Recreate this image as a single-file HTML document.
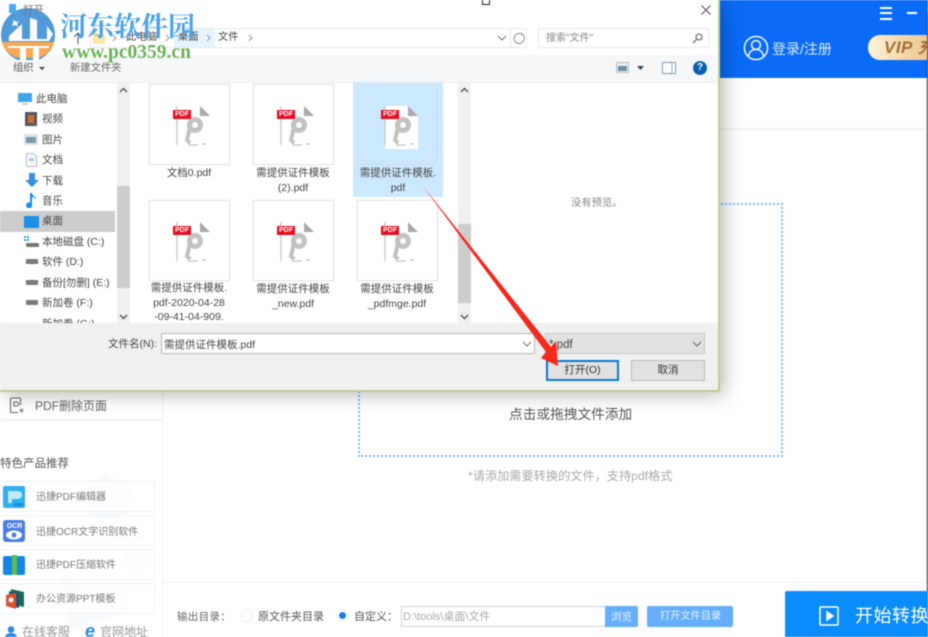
<!DOCTYPE html>
<html lang="zh"><head><meta charset="utf-8"><title>打开</title>
<style>
html,body{margin:0;padding:0;background:#fff}
#p{position:relative;width:928px;height:637px;overflow:hidden;background:#fff;filter:blur(.55px);font-family:"Liberation Sans","Noto Sans CJK SC",sans-serif;color:#444}
#p div,#p svg,#p span{position:absolute}
.t{line-height:14px;white-space:nowrap;font-size:10.5px}
.tile{width:81px;height:81px;background:#fff;border:1px solid #e6e6e6;box-sizing:border-box;box-shadow:0 0 0 .5px #efefef}
.tag{left:23px;top:25px;width:18px;height:9px;background:#e60a22;color:#fff;font-size:7px;line-height:9px;text-align:center;font-weight:bold}
.cap{width:90px;text-align:center;font-size:10.5px;line-height:14.5px;color:#444;word-break:break-all}
.card{left:-1px;width:156px;height:31px;border:1px solid #f1f1f1;box-sizing:border-box;background:rgba(255,255,255,.6)}
.side{font-size:10px;color:#777}
</style></head><body><div id="p">

<svg width="0" height="0" style="left:0;top:0"><defs><symbol id="pi" viewBox="0 0 80 80"><path d="M27 21v39" stroke="#ccc" stroke-width="1.500"/><path d="M50 21l10 10H50z" fill="#a8a8ae"/><circle cx="45" cy="40" r="5.500" fill="none" stroke="#c2c2c2" stroke-width="5"/><path d="M40 42l-3 13 3 3" fill="none" stroke="#c2c2c2" stroke-width="4"/><path d="M38 60h10M52 59h4" fill="none" stroke="#ccc" stroke-width="1.500"/></symbol></defs></svg>

<!-- main app background -->
<div style="left:720px;top:0;width:208px;height:78px;background:#0a6cf6"></div>
<div style="left:880px;top:7px;width:12px;height:2px;background:#fff;box-shadow:0 5px 0 #fff,0 11px 0 #fff"></div>
<div style="left:907px;top:12px;width:10px;height:2px;background:#fff"></div>
<svg style="left:743px;top:35px" width="26" height="26" viewBox="0 0 26 26" fill="none" stroke="#fff" stroke-width="1.4"><circle cx="13" cy="13" r="11.6"/><circle cx="13" cy="10" r="4.4"/><path d="M5.5 21c.8-4.500 3.800-6.600 7.500-6.600s6.700 2.100 7.500 6.600"/></svg>
<div class="t" style="left:772px;top:42px;font-size:14px;color:#dcebff">登录/注册</div>
<div style="left:868px;top:35px;width:70px;height:25px;border-radius:12px;background:linear-gradient(90deg,#fff3dc,#f1d3a0 60%,#e8c48e)"></div>
<div class="t" style="left:884px;top:41px;font-size:17px;font-weight:bold;font-style:italic;color:#a5703a;letter-spacing:.5px">VIP 充</div>

<div style="left:720px;top:128px;width:206px;height:2px;background:#f3f3f3"></div>
<div style="left:925px;top:78px;width:2px;height:513px;background:linear-gradient(90deg,#fff,#ddd)"></div>
<div style="left:927px;top:14px;width:1px;height:623px;background:#333"></div>
<div style="left:162px;top:391px;width:1px;height:246px;background:#f2f2f2"></div>

<!-- drop zone -->
<div style="left:358px;top:203px;width:425px;height:254px;border:2px dotted #7cbcff;box-sizing:border-box"></div>
<div class="t" style="left:509px;top:408px;font-size:13.700px;color:#555">点击或拖拽文件添加</div>
<div class="t" style="left:468px;top:469px;font-size:12.200px;color:#aaa">*请添加需要转换的文件，支持pdf格式</div>

<!-- sidebar -->
<svg style="left:9px;top:397px" width="16" height="17" viewBox="0 0 16 17" fill="none" stroke="#666" stroke-width="1.100"><path d="M9 15.500H2.500a1 1 0 0 1-1-1V2a1 1 0 0 1 1-1h8a1 1 0 0 1 1 1v6"/><path d="M5 5h2.500a1.500 1.500 0 0 1 0 4H5zM11 12l3 3M14 12l-3 3"/></svg>
<div class="t" style="left:35px;top:399px;font-size:12px;color:#666">PDF删除页面</div>
<div style="left:0;top:419px;width:162px;height:2px;background:#f4f4f4"></div>
<div class="t" style="left:0;top:457px;font-size:11.500px;color:#555">特色产品推荐</div>

<svg style="left:40px;top:470px" width="110" height="165" viewBox="0 0 110 165" fill="#eff8fd"><path d="M40 25l25-20 30 15-25 45z" opacity=".7"/><circle cx="100" cy="65" r="4"/><circle cx="95" cy="90" r="10" fill="none" stroke="#eff8fd" stroke-width="2"/><path d="M20 105l70 35-60 20z" opacity=".5"/></svg>

<div class="card" style="top:481px"></div>
<div class="card" style="top:515px"></div>
<div class="card" style="top:549px"></div>
<div class="card" style="top:583px"></div>

<svg style="left:3px;top:486px" width="23" height="23" viewBox="0 0 23 23"><rect width="22" height="22" rx="2" fill="#2fb0f0"/><path d="M5 17V5h9q5 0 5 4t-5 4H9v4z" fill="#bfeaff"/><rect x="11" y="17" width="9" height="3" fill="#1d8fd8"/></svg>
<div class="t side" style="left:36px;top:491px">迅捷PDF编辑器</div>

<svg style="left:3px;top:520px" width="23" height="23" viewBox="0 0 23 23"><rect width="22" height="22" rx="3" fill="#4a7ee6"/><ellipse cx="11" cy="15" rx="8" ry="4.500" fill="#fff"/><circle cx="11" cy="15" r="2.500" fill="#4a7ee6"/></svg>
<div class="t" style="left:4px;top:522px;font-size:7px;font-weight:bold;color:#fff;line-height:9px;width:21px;text-align:center">OCR</div>
<div class="t side" style="left:36px;top:526px">迅捷OCR文字识别软件</div>

<svg style="left:3px;top:555px" width="23" height="21" viewBox="0 0 23 21"><path d="M2 1h18a2 2 0 0 1 2 2v15a2 2 0 0 1-2 2H2a2 2 0 0 1-2-2V3a2 2 0 0 1 2-2z" fill="#1586e8"/><rect x="9" y="0" width="5" height="20" fill="#5cc04c"/></svg>
<div class="t side" style="left:36px;top:559px">迅捷PDF压缩软件</div>

<svg style="left:5px;top:588px" width="20" height="22" viewBox="0 0 20 22"><path d="M6 1l13 3v15L6 16z" fill="#1a6a58"/><path d="M4 3l10 3v14L4 18z" fill="#1f4f7c"/><path d="M1 7l10-2v16L1 18z" fill="#d9502f"/><circle cx="6" cy="12" r="2.500" fill="#fff"/></svg>
<div class="t side" style="left:36px;top:593px">办公资源PPT模板</div>

<svg style="left:5px;top:626px" width="12" height="12" viewBox="0 0 12 12" fill="#2f8be6"><circle cx="6" cy="3.500" r="3.300"/><path d="M0 12c0-3.500 2.500-5 6-5s6 1.500 6 5z"/></svg>
<div class="t" style="left:22px;top:625px;font-size:12px;color:#999">在线客服</div>
<div class="t" style="left:85px;top:622px;font-size:18px;font-style:italic;font-weight:bold;color:#2f8be6;line-height:18px">e</div>
<div class="t" style="left:100px;top:625px;font-size:12px;color:#999">官网地址</div>

<!-- bottom bar -->
<div style="left:162px;top:582px;width:764px;height:1px;background:#eee"></div>
<div class="t" style="left:177px;top:610px;font-size:10.500px;color:#666;letter-spacing:.3px">输出目录：</div>
<div style="left:241px;top:610px;width:12px;height:12px;border-radius:50%;border:1px solid #eee;box-sizing:border-box;background:#fff"></div>
<div class="t" style="left:258px;top:610px;font-size:11px;color:#555">原文件夹目录</div>
<div style="left:339px;top:612px;width:7px;height:7px;border-radius:50%;background:#1a7fe8;box-shadow:0 0 0 2px #fff,0 0 0 3px #f0f0f0"></div>
<div class="t" style="left:354px;top:610px;font-size:11px;color:#555">自定义：</div>
<div style="left:401px;top:606px;width:205px;height:21px;border:1px solid #d0d0d0;box-sizing:border-box;background:#fff"></div>
<div class="t" style="left:403px;top:610px;font-size:11px;color:#aaa">D:\tools\桌面\文件</div>
<div style="left:605px;top:606px;width:33px;height:21px;background:#64aefc;border-radius:0 2px 2px 0"></div>
<div class="t" style="left:611px;top:610px;font-size:10.500px;color:#e8f3ff">浏览</div>
<div style="left:647px;top:606px;width:86px;height:21px;background:#64aefc;border-radius:2px"></div>
<div class="t" style="left:660px;top:610px;font-size:10.200px;color:#e8f3ff">打开文件目录</div>
<div style="left:785px;top:591px;width:143px;height:46px;background:#0a8cfc;border-radius:2px 0 0 0"></div>
<svg style="left:819px;top:606px" width="20" height="20" viewBox="0 0 20 20" fill="none" stroke="#fff" stroke-width="1.500"><rect x="1" y="1" width="18" height="18" rx="1"/><path d="M8 6l6 4-6 4z" fill="#fff"/></svg>
<div class="t" style="left:855px;top:607px;font-size:18px;color:#fff;line-height:18px;letter-spacing:.5px">开始转换</div>

<!-- dialog shadow + body -->
<div style="left:0;top:0;width:720px;height:391px;box-shadow:4px 4px 18px rgba(0,0,0,.28)"></div>
<div style="left:0;top:0;width:720px;height:392px;background:#fff;border-right:2px solid #bccd95;border-bottom:2px solid #bccd95;box-sizing:border-box;overflow:hidden">

  <!-- close -->
  <svg style="left:700px;top:4px" width="12" height="12" viewBox="0 0 12 12" stroke="#555" stroke-width="1.100"><path d="M1.500 1.500l9 9M10.500 1.500l-9 9"/></svg>

  <!-- address row -->
  <svg style="left:73px;top:32px" width="10" height="12" viewBox="0 0 10 12" fill="none" stroke="#666" stroke-width="1.200"><path d="M5 12V1M1 5l4-4 4 4"/></svg>
  <div style="left:90px;top:28px;width:437px;height:20px;border:1px solid #e8e8e8;box-sizing:border-box"></div>
  <svg style="left:93px;top:32px" width="13" height="13" viewBox="0 0 13 13"><path d="M0 1h5l1 2h6v9H0z" fill="#f6d680"/><path d="M0 4h12v8H0z" fill="#fbe6a4"/></svg>
  <div style="left:174px;top:29px;width:41px;height:18px;background:#e5f3ff"></div>
  <div class="t" style="left:126px;top:31px;font-size:10.300px">此电脑</div>
  <div class="t" style="left:178px;top:31px;font-size:10.300px">桌面</div>
  <div class="t" style="left:218px;top:31px;font-size:10.300px">文件</div>
  <svg style="left:110px;top:33px" width="145" height="10" viewBox="0 0 145 10" fill="none" stroke="#999" stroke-width="1"><path d="M3 2l3 3-3 3M56 2l3 3-3 3M97 2l3 3-3 3M139 2l3 3-3 3"/></svg>
  <svg style="left:497px;top:34px" width="10" height="8" viewBox="0 0 10 8" fill="none" stroke="#777" stroke-width="1.100"><path d="M1 2l4 4 4-4"/></svg>
  <div style="left:510px;top:28px;width:1px;height:20px;background:#e8e8e8"></div>
  <svg style="left:513px;top:32px" width="13" height="13" viewBox="0 0 13 13" fill="none" stroke="#999" stroke-width="1.100"><path d="M10.500 4a5 5 0 1 1-1.800-1.800M9 .5v2.500h2.500"/></svg>
  <div style="left:538px;top:28px;width:171px;height:20px;border:1px solid #e8e8e8;box-sizing:border-box"></div>
  <div class="t" style="left:546px;top:32px;font-size:10px;color:#888">搜索"文件"</div>
  <svg style="left:692px;top:33px" width="11" height="11" viewBox="0 0 11 11" fill="none" stroke="#777" stroke-width="1.300"><circle cx="7" cy="4" r="3"/><path d="M4.500 6.500L1 10"/></svg>

  <!-- toolbar -->
  <div style="left:0;top:55px;width:718px;height:27px;background:#f5f6f7;border-bottom:1px solid #eee"></div>
  <div class="t" style="left:13px;top:62px;font-size:10.300px;color:#555">组织</div>
  <svg style="left:39px;top:67px" width="6" height="4"><path d="M0 0h6L3 3z" fill="#444"/></svg>
  <div class="t" style="left:70px;top:62px;font-size:10.300px;color:#666">新建文件夹</div>
  <svg style="left:616px;top:62px" width="13" height="11" viewBox="0 0 13 11"><rect x=".5" y=".5" width="12" height="10" fill="#e8eef5" stroke="#bbb"/><path d="M2 4h9v5H2z" fill="#6f8fa8"/></svg>
  <svg style="left:637px;top:66px" width="7" height="4"><path d="M0 0h7L3.500 4z" fill="#345"/></svg>
  <svg style="left:662px;top:62px" width="14" height="12" viewBox="0 0 14 12" fill="#fff" stroke="#8a97a5"><rect x=".5" y=".5" width="13" height="11"/><path d="M10 .5v11" stroke="#79a9d8"/></svg>
  <div style="left:693px;top:61px;width:14px;height:14px;background:#0a62ae;border-radius:50%;color:#fff;font-size:10px;line-height:14px;text-align:center;font-weight:bold">?</div>

  <!-- nav pane -->
  <div style="left:0;top:211px;width:115px;height:21px;background:#cdcdcd"></div>
  <svg style="left:18px;top:93px" width="14" height="13" viewBox="0 0 14 13"><rect width="14" height="9" fill="#3fa6e8"/><rect x="4" y="10" width="6" height="2" fill="#ccc"/></svg>
  <div class="t" style="left:36px;top:92px">此电脑</div>
  <svg style="left:25px;top:112px" width="12" height="14" viewBox="0 0 12 14"><rect width="12" height="14" fill="#556"/><rect x="3" y="3" width="6" height="8" fill="#c9762d"/></svg>
  <div class="t" style="left:42px;top:112px">视频</div>
  <svg style="left:24px;top:134px" width="14" height="11" viewBox="0 0 14 11"><rect width="14" height="11" fill="#dde3e8"/><rect x="2" y="3" width="10" height="6" fill="#7d9aa8"/></svg>
  <div class="t" style="left:42px;top:133px">图片</div>
  <svg style="left:26px;top:153px" width="11" height="14" viewBox="0 0 11 14"><path d="M.5.500h7l3 3v10H.5z" fill="#f6f8fa" stroke="#bbb"/><path d="M3 5h5v3H3z" fill="#a8cbe8"/></svg>
  <div class="t" style="left:42px;top:153px">文档</div>
  <svg style="left:25px;top:173px" width="14" height="14" viewBox="0 0 14 14"><path d="M4 0h6v7h4l-7 7-7-7h4z" fill="#3a8ee0"/></svg>
  <div class="t" style="left:42px;top:174px">下载</div>
  <svg style="left:26px;top:193px" width="11" height="15" viewBox="0 0 11 15"><path d="M4 0h2c0 3 4 3 4 7-1-2-2-2.500-4-3v8a3 3 0 1 1-2-2.500z" fill="#1a8de8"/></svg>
  <div class="t" style="left:42px;top:194px">音乐</div>
  <svg style="left:24px;top:216px" width="15" height="12" viewBox="0 0 15 12"><rect width="15" height="12" fill="#1e90e8"/></svg>
  <div class="t" style="left:42px;top:214px">桌面</div>
  <svg style="left:24px;top:236px" width="15" height="12" viewBox="0 0 15 12"><path d="M0 0h2v2H0zM3 0h2v2H3zM0 3h2v2H0zM3 3h2v2H3z" fill="#2ba0e0"/><rect x="2" y="7" width="13" height="4" rx="1" fill="#777"/></svg>
  <div class="t" style="left:42px;top:235px">本地磁盘 (C:)</div>
  <svg style="left:26px;top:259px" width="12" height="5"><rect width="12" height="5" rx="1" fill="#777"/></svg>
  <div class="t" style="left:42px;top:255px">软件 (D:)</div>
  <svg style="left:26px;top:280px" width="12" height="5"><rect width="12" height="5" rx="1" fill="#777"/></svg>
  <div class="t" style="left:42px;top:276px">备份[勿删] (E:)</div>
  <svg style="left:26px;top:300px" width="12" height="5"><rect width="12" height="5" rx="1" fill="#777"/></svg>
  <div class="t" style="left:42px;top:296px">新加卷 (F:)</div>
  <div class="t" style="left:42px;top:317px">新加卷 (G:)</div>

  <div style="left:117px;top:82px;width:13px;height:241px;background:#f0f0f0"></div>
  <div style="left:117px;top:186px;width:13px;height:102px;background:#cdcdcd"></div>
  <svg style="left:119px;top:87px" width="9" height="6" fill="none" stroke="#555" stroke-width="1.400"><path d="M1 5l3.500-3.500L8 5"/></svg>
  <svg style="left:119px;top:314px" width="9" height="6" fill="none" stroke="#555" stroke-width="1.400"><path d="M1 1l3.500 3.500L8 1"/></svg>

  <!-- selected -->
  <div style="left:353px;top:82px;width:90px;height:115px;background:#cce8ff"></div>

  <!-- tiles -->
  <div class="tile" style="left:149px;top:84px"><svg width="80" height="80" style="left:0;top:0"><use href="#pi"/></svg><div class="tag">PDF</div></div>
  <div class="tile" style="left:253px;top:84px"><svg width="80" height="80" style="left:0;top:0"><use href="#pi"/></svg><div class="tag">PDF</div></div>
  <div class="tile" style="left:357px;top:84px;background:#cce8ff;border-color:#bcdcf2"><svg width="80" height="80" viewBox="0 0 80 80" style="left:0;top:0"><path d="M27 21h23l10 10v33H27z" fill="#fff"/><use href="#pi" width="80" height="80"/></svg><div class="tag">PDF</div></div>
  <div class="tile" style="left:149px;top:200px"><svg width="80" height="80" style="left:0;top:0"><use href="#pi"/></svg><div class="tag">PDF</div></div>
  <div class="tile" style="left:253px;top:200px"><svg width="80" height="80" style="left:0;top:0"><use href="#pi"/></svg><div class="tag">PDF</div></div>
  <div class="tile" style="left:357px;top:200px"><svg width="80" height="80" style="left:0;top:0"><use href="#pi"/></svg><div class="tag">PDF</div></div>

  <div class="cap" style="left:144px;top:166px">文档0.pdf</div>
  <div class="cap" style="left:248px;top:166px">需提供证件模板<br>(2).pdf</div>
  <div class="cap" style="left:353px;top:166px">需提供证件模板.<br>pdf</div>
  <div class="cap" style="left:144px;top:281px">需提供证件模板.<br>pdf-2020-04-28<br>-09-41-04-909.</div>
  <div class="cap" style="left:248px;top:282px">需提供证件模板<br>_new.pdf</div>
  <div class="cap" style="left:352px;top:282px">需提供证件模板<br>_pdfmge.pdf</div>

  <!-- file scrollbar -->
  <div style="left:458px;top:82px;width:13px;height:241px;background:#f0f0f0"></div>
  <div style="left:458px;top:224px;width:13px;height:79px;background:#cdcdcd"></div>
  <svg style="left:460px;top:87px" width="9" height="6" fill="none" stroke="#555" stroke-width="1.400"><path d="M1 5l3.500-3.500L8 5"/></svg>
  <svg style="left:460px;top:314px" width="9" height="6" fill="none" stroke="#555" stroke-width="1.400"><path d="M1 1l3.500 3.500L8 1"/></svg>

  <div class="t" style="left:571px;top:197px;font-size:10.300px;color:#888">没有预览。</div>

  <!-- footer -->
  <div style="left:0;top:323px;width:718px;height:67px;background:#f0f0f0"></div>
  <div class="t" style="left:108px;top:337px;font-size:10.500px">文件名(N):</div>
  <div style="left:161px;top:333px;width:374px;height:21px;background:#fff;border:1px solid #b4b4b4;box-sizing:border-box"></div>
  <div class="t" style="left:164px;top:338px;font-size:10.500px">需提供证件模板.pdf</div>
  <svg style="left:522px;top:341px" width="10" height="6" fill="none" stroke="#777" stroke-width="1.100"><path d="M1 1l4 4 4-4"/></svg>
  <div style="left:545px;top:333px;width:160px;height:21px;background:#e1e1e1;border:1px solid #c4c4c4;box-sizing:border-box"></div>
  <div class="t" style="left:549px;top:338px;font-size:11.500px">*.pdf</div>
  <svg style="left:692px;top:341px" width="10" height="6" fill="none" stroke="#666" stroke-width="1.100"><path d="M1 1l4 4 4-4"/></svg>
  <div style="left:546px;top:360px;width:73px;height:21px;background:#e1e1e1;border:2px solid #0a78d8;box-sizing:border-box;text-align:center;font-size:10.500px;line-height:17px;color:#333">打开(O)</div>
  <div style="left:631px;top:360px;width:74px;height:21px;background:#e1e1e1;border:1px solid #bbb;box-sizing:border-box;text-align:center;font-size:10.500px;line-height:19px;color:#333">取消</div>
</div>

<!-- small square -->
<div style="left:482px;top:-3px;width:8px;height:8px;border:1px solid #222;box-sizing:border-box;background:#fff"></div>

<!-- watermark logo -->
<svg style="left:0;top:8px" width="60" height="52" viewBox="0 0 60 52">
  <circle cx="28" cy="27" r="27" fill="#3d8fd6" opacity=".9"/>
  <path d="M2 34h52q-4 14-18 16H20Q6 48 2 34z" fill="#f7a950"/>
  <path d="M9 28l13-12v15h8V10l7 2v19h10V18l6 8-4 7H9z" fill="#fff"/>
  <path d="M20 40h6v12h-6zM33 40h6v12h-6z" fill="#fff"/>
  <path d="M8 39h41" stroke="#fff" stroke-width="2" fill="none"/>
  <path d="M14 12l2 2 3-1-2 3 1 3-3-2-3 1 1-3z" fill="#fff"/>
</svg>
<svg style="left:8px;top:3px" width="9" height="11" viewBox="0 0 9 11"><path d="M1 1h7v9H1z" fill="#4aa8ec"/></svg>
<div class="t" style="left:23px;top:3px;font-size:10.500px;color:#777">打开</div>
<div class="t" style="left:60px;top:10px;font-size:27px;line-height:30px;font-weight:bold;color:#4ba3ea;font-family:'Noto Serif CJK SC','Liberation Serif',serif">河东软件园</div>
<div class="t" style="left:62px;top:44px;font-size:19.500px;line-height:18px;font-weight:bold;color:#6cb25a;font-family:'Liberation Serif',serif">www.pc0359.cn</div>

<!-- red arrow -->
<svg style="left:415px;top:180px" width="150" height="195" viewBox="415 180 150 195"><path d="M422 185L551 347l5-6 2 25-17-8 5-6z" fill="#f5291c"/></svg>

</div></body></html>
